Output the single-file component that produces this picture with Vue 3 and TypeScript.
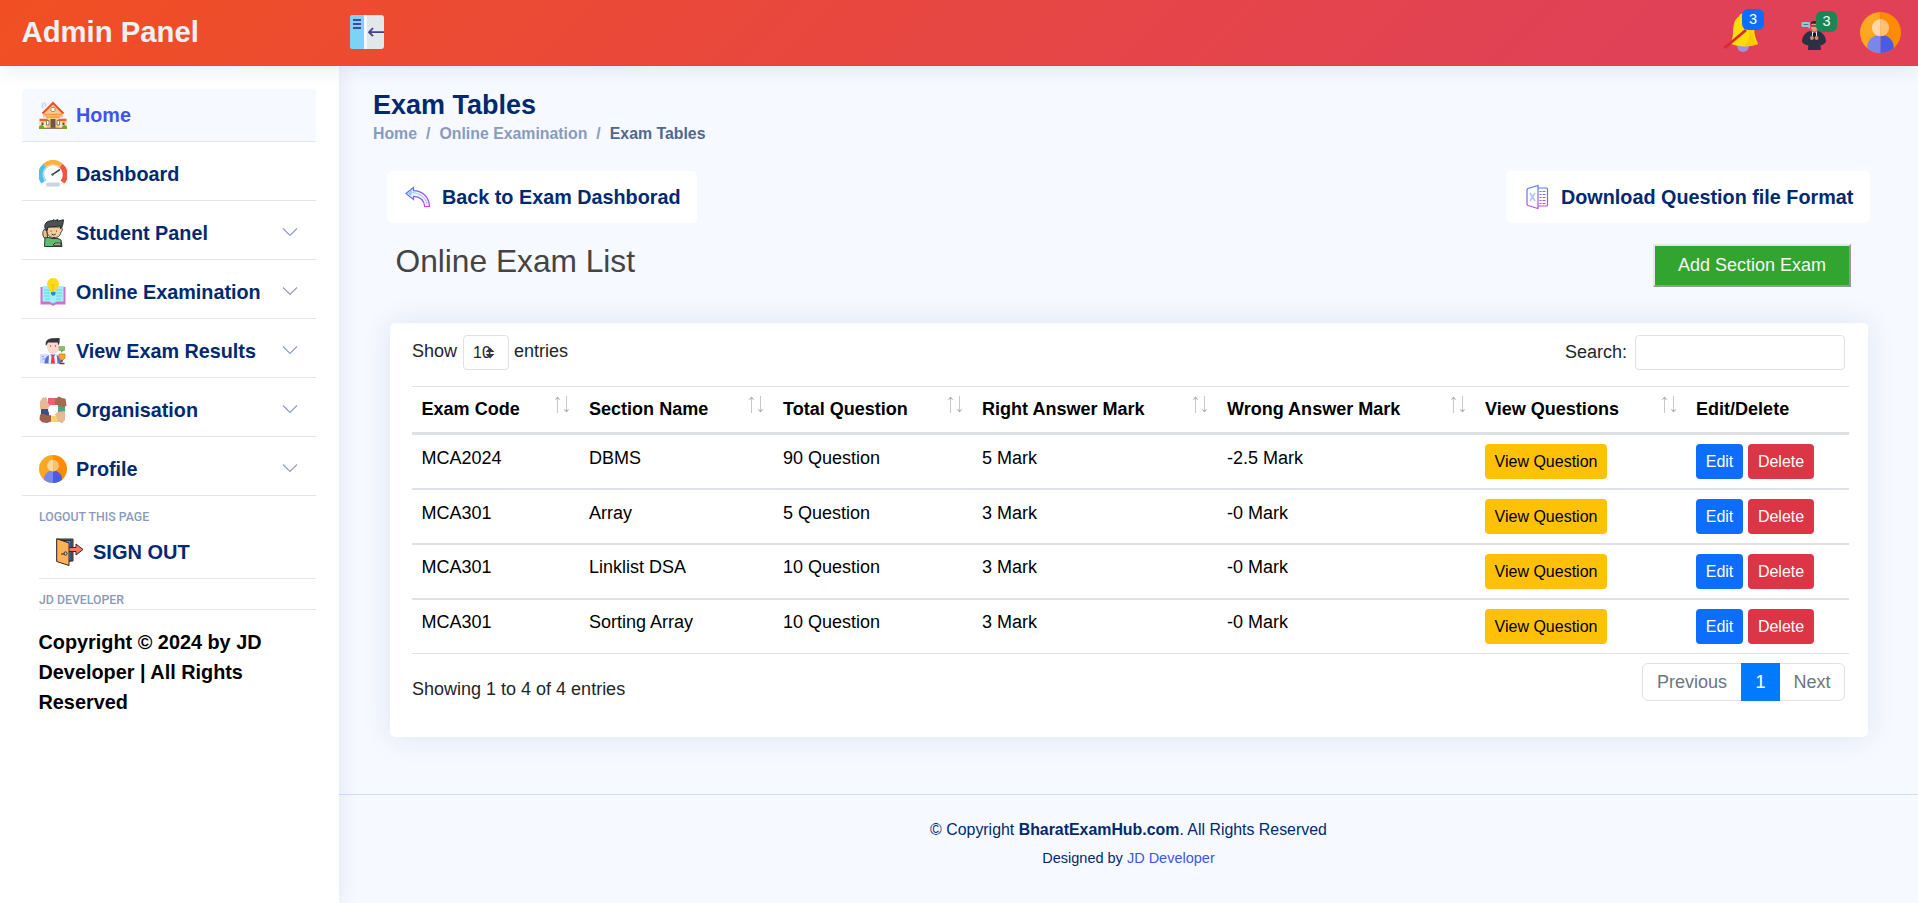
<script setup lang="ts">
interface NavItem {
  label: string
  icon: string
  active?: boolean
  expandable?: boolean
}

interface ExamRow {
  code: string
  section: string
  total: string
  right: string
  wrong: string
}

const navItems: NavItem[] = [
  { label: 'Home', icon: 'home', active: true },
  { label: 'Dashboard', icon: 'gauge' },
  { label: 'Student Panel', icon: 'student', expandable: true },
  { label: 'Online Examination', icon: 'book', expandable: true },
  { label: 'View Exam Results', icon: 'results', expandable: true },
  { label: 'Organisation', icon: 'hands', expandable: true },
  { label: 'Profile', icon: 'profile', expandable: true },
]

const columns: string[] = [
  'Exam Code',
  'Section Name',
  'Total Question',
  'Right Answer Mark',
  'Wrong Answer Mark',
  'View Questions',
  'Edit/Delete',
]

const rows: ExamRow[] = [
  { code: 'MCA2024', section: 'DBMS', total: '90 Question', right: '5 Mark', wrong: '-2.5 Mark' },
  { code: 'MCA301', section: 'Array', total: '5 Question', right: '3 Mark', wrong: '-0 Mark' },
  { code: 'MCA301', section: 'Linklist DSA', total: '10 Question', right: '3 Mark', wrong: '-0 Mark' },
  { code: 'MCA301', section: 'Sorting Array', total: '10 Question', right: '3 Mark', wrong: '-0 Mark' },
]
</script>

<template>
  <div class="app">
    <header class="header">
      <div class="brand">Admin Panel</div>
      <svg class="toggle" viewBox="0 0 34 34">
        <rect width="34" height="34" rx="3" fill="#dfe9ea" />
        <path d="M3 0H14V34H3A3 3 0 0 1 0 31V3A3 3 0 0 1 3 0Z" fill="#7bd3f5" />
        <rect x="14" width="3" height="34" fill="#f4f8fa" />
        <path d="M3 5h8M3 9h8M3 13h8" stroke="#4b459b" stroke-width="1.8" />
        <path d="M34 17.2H19.5M23 13.2l-4 4 4 4" fill="none" stroke="#453f8c" stroke-width="1.8" />
      </svg>
      <div class="header-actions">
        <div class="action bell">
          <svg viewBox="0 0 38 42" width="38" height="42">
            <circle cx="21" cy="34" r="6" fill="#a58de6" />
            <path d="M17.500 3a3 3 0 0 1 5.500.5c6 2 8 7 9 13.500.7 5.500 1.500 10 4.200 15-8 3.500-20 3-28.200-.5 2.800-4 3-9 3.200-14C11.500 11 13.500 6.500 17 4.500Z" fill="#fddc02" />
            <path d="M24 8c4 2 5.500 5 6 10 .7 6 2 11 5.700 14-4 1.500-8 1.800-13 1.700C29 27 29 16 24 8Z" fill="#f6b900" opacity=".5" />
            <path d="M2.500 36L24 18" stroke="#d92b2b" stroke-width="2.800" />
          </svg>
          <span class="badge blue">3</span>
        </div>
        <div class="action msg">
          <svg viewBox="0 0 28 30" width="28" height="30">
            <rect x="1.500" y="1" width="8.500" height="5" rx="1" fill="#8fc6df" />
            <path d="M7 5.500l3 2.300V5Z" fill="#8fc6df" />
            <path d="M3.500 3.500h5" stroke="#4a7b96" stroke-width="1" />
            <ellipse cx="14.500" cy="5.500" rx="3.600" ry="5" fill="#dc9b7b" />
            <path d="M10.700 4C10.500 1 12 0 14.500 0s4 1.200 3.800 4L17 2.800h-5Z" fill="#2e2726" />
            <path d="M11 5h6.500" stroke="#40302c" stroke-width="1.200" />
            <path d="M2 21c0-5 2.500-9 8-11l4 1.500 4.500-1.500c5 2 7.500 6 7.500 11-1.500 2-3.500 3-5.500 3.200L21 29H8l.3-4.800C5.500 24 3.500 23 2 21Z" fill="#2b3142" />
            <path d="M12 10l2.500 2.500L17 10v5h-5Z" fill="#e4e4ea" />
            <path d="M13 12h3v7h-3Z" fill="#141720" />
            <circle cx="12" cy="17" r="2" fill="#cb8b6e" />
            <circle cx="16.500" cy="17" r="2" fill="#cb8b6e" />
          </svg>
          <span class="badge green">3</span>
        </div>
        <svg class="avatar" viewBox="0 0 28 28">
          <use href="#profile-art" />
        </svg>
      </div>
    </header>

    <aside class="sidebar">
      <ul class="nav">
        <li v-for="item in navItems" :key="item.label" class="nav-item">
          <a class="nav-link" :class="{ active: item.active }">
            <svg class="nav-icon" viewBox="0 0 28 28">
              <g v-if="item.icon === 'home'">
                <path d="M4 7C2 5 5 4 3 2M6 5.500c2-2-1-3 0-4" stroke="#ccd7e1" stroke-width="1.800" fill="none" />
                <path d="M0 20h28v6H0Z" fill="#fbe3ad" />
                <path d="M8 16h12v11H8Z" fill="#fbcf77" />
                <path d="M14 2.500 24 12.500v4H4v-4Z" fill="#fbc98c" />
                <path d="M3.500 12.500 14 2l10.500 10.500" fill="none" stroke="#ee4f20" stroke-width="2" />
                <path d="M5 13.500h18M7 16h14" stroke="#f9954b" stroke-width="1.400" />
                <path d="M.5 19h8M19.500 19h8" stroke="#f2602a" stroke-width="2.600" />
                <rect x="12" y="6.500" width="4" height="4" rx="1" fill="#fff" stroke="#a1735b" stroke-width=".8" />
                <path d="M11.500 18h5v9h-5Z" fill="#765148" />
                <path d="M7.500 19.500H10V24H7.500Zm10.500 0h2.500V24H18Z" fill="#fff" stroke="#665" stroke-width=".8" />
                <path d="M2.500 21.500h2V24h-2Zm21 0h2V24h-2Z" fill="#654e45" />
                <path d="M0 28v-2.500q2.500-3 5 0V28Zm23 0v-2.500q2.500-3 5 0V28Z" fill="#79a22e" />
                <path d="M5 27.300h18" stroke="#927a65" stroke-width="1.400" />
              </g>
              <g v-else-if="item.icon === 'gauge'" fill="none">
                <circle cx="14" cy="14.500" r="9.500" fill="#fff" />
                <path d="M4.500 22A11.500 11.500 0 0 1 6 5.600" stroke="#53bdea" stroke-width="5" />
                <path d="M6 5.600A11.500 11.500 0 0 1 22 5.600" stroke="#fbb040" stroke-width="5" />
                <path d="M22 5.600A11.500 11.500 0 0 1 23.500 22" stroke="#f2543e" stroke-width="5" />
                <path d="M7 21A9.500 9.500 0 0 1 7.500 7.300" stroke="#a6dcf3" stroke-width="1.700" />
                <path d="M7.500 7.300A9.500 9.500 0 0 1 20.500 7.300" stroke="#fbd184" stroke-width="1.700" />
                <path d="M13 14.800 21 9.500" stroke="#33464f" stroke-width="1.500" />
                <circle cx="13.500" cy="14.500" r="1.300" fill="#576b7b" />
                <rect x="7" y="22.500" width="14" height="4" rx="1.500" fill="#cbd4df" />
              </g>
              <g v-else-if="item.icon === 'student'" stroke="#1c2a2a" stroke-width=".9">
                <path d="M5.500 27.500 6 18l4 .5 3 1h6l3 1.500 1 6.500Z" fill="#5bbd6d" />
                <path d="M5.500 19c-2.500-3-2-6-.5-8.500l3 1 .5 7Z" fill="#efbd8e" />
                <path d="M8 8h13c2.800.2 3 3.500 1 5-1 4.500-3 5.500-7 5.500s-6-1.500-7-5.500Z" fill="#f6cc9c" />
                <path d="M6.500 10.500C4 5 8 1.500 13 1.800l2-1.200 1 1 3-1-.4 1.500L24.500.8c-.2 3-1 8-3 9V7L9 8l-1 3.500Z" fill="#4f4f55" />
                <circle cx="12" cy="12" r=".6" fill="#16292a" stroke="none" />
                <circle cx="17.500" cy="12" r=".6" fill="#16292a" stroke="none" />
                <path d="M12.500 15.200q2.200 1.600 4.200 0M16 24h6v2.200h-8Z" fill="#f6cc9c" />
              </g>
              <g v-else-if="item.icon === 'book'">
                <path d="M1.500 9h3v14h7.500l2 2 2-2h7.500V9h3v17.500H16.500L14 28l-2.500-1.500h-10Z" fill="#cb72cb" />
                <path d="M3.500 8H10l4 3 4-3h6.500v15.500H18L14 25.500l-4-2H3.500Z" fill="#a2eff8" />
                <path d="M5 12h6M5 15h6M5 18h6M17 12h6M17 15h6M17 18h6M6 21h5M17 21h5" stroke="#62cde2" stroke-width=".9" />
                <path d="M8 6a6 6 0 1 1 10 4.500c-1 1-1 2.500-1.500 3.500h-5c-.5-1-.5-2.500-1.500-3.500A6 6 0 0 1 8 6Z" fill="#ffda17" />
                <path d="M12 6l2 2 2-2M14 8v6" fill="none" stroke="#f9b318" stroke-width=".9" />
                <path d="M12 14h4.500v2l-1 1.500h-2.500l-1-1.500Z" fill="#278bd4" />
              </g>
              <g v-else-if="item.icon === 'results'">
                <path d="M1 17h8v9.500H1Z" fill="#d5dcff" />
                <path d="M3 19.500h2M3 22h4M6 24.500h2" stroke="#8792ef" stroke-width=".9" />
                <path d="M5.500 26.500c0-5 2.500-8 5.500-9h6c3 1 5.500 4 5.500 9Z" fill="#5f6fd8" />
                <path d="M10 16l4 5 3.500-5 1 10.500h-9Z" fill="#f3f4ff" />
                <path d="M12.700 18.500h2.300l1 8h-4.200Z" fill="#d74444" />
                <path d="M8 5h12v5c0 4-3 7-6 7s-6-3-6-7Z" fill="#ffd8cd" />
                <path d="M7 9C5.500 4 9 1.500 13 1.200L20.500 1c.5 2 0 5-.7 7.500L18.500 5.500H9Z" fill="#34373d" />
                <circle cx="11.500" cy="9" r=".7" fill="#655" />
                <circle cx="16.500" cy="9" r=".7" fill="#655" />
                <rect x="19.500" y="9" width="6.500" height="5" rx="1" fill="#8bbb77" />
                <path d="M22 13v3l3-3Z" fill="#71a665" />
                <path d="M20 17h6v4l-3 3-3-3Z" fill="#f5a52f" stroke="#d27c16" stroke-width=".8" />
                <path d="M23 23v2m-2.500 1.500h5" stroke="#624426" stroke-width="1.500" />
              </g>
              <g v-else-if="item.icon === 'hands'">
                <path d="M9 2h9v7H9Z" fill="#ee5f72" />
                <path d="M19 9h7v8h-7Z" fill="#46a886" />
                <path d="M11 20h9v6h-9Z" fill="#f8d365" />
                <path d="M2 11h8v9H2Z" fill="#414a8f" />
                <path d="M1 13V5.500L4 1l1.500 1L6.500.5 8 3l1.500 5L12 9.500 9 13Z" fill="#e7b895" />
                <path d="M16 8.500V3l4-2.500L23 2l3.500.8L27 6l.5 4L23 11l-3.500-1.500Z" fill="#a86851" />
                <path d="M26 15v9L23 27.500l-2-1.300L18.500 25 17.500 20l-2.500-1.500L18.500 16Z" fill="#e7b895" />
                <path d="M12 19v6.500L8 27l-5-.7L.5 23.500 1 18.500l4-.5 3.500 1.500Z" fill="#9d604b" />
                <circle cx="13.800" cy="13.800" r="4.800" fill="#fff" />
              </g>
              <g v-else id="profile-art">
                <clipPath id="profile-clip"><circle cx="14" cy="14" r="14" /></clipPath>
                <g clip-path="url(#profile-clip)">
                  <path d="M0 0h14v28H0Z" fill="#fea720" />
                  <path d="M14 0h14v28H14Z" fill="#fe8c00" />
                  <path d="M5 28v-4a9 8.500 0 0 1 9-8.500V28Z" fill="#7986eb" />
                  <path d="M14 15.500a9 8.500 0 0 1 9 8.500v4h-9Z" fill="#4a5be4" />
                  <path d="M14 4.700a5.900 5.900 0 0 0 0 11.800Z" fill="#ffd8a6" />
                  <path d="M14 4.700a5.900 5.900 0 0 1 0 11.800Z" fill="#fdc175" />
                </g>
              </g>
            </svg>
            <span>{{ item.label }}</span>
            <svg v-if="item.expandable" class="chevron" viewBox="0 0 16 16">
              <path d="M1 4.500l7 7 7-7" fill="none" stroke="#8b9cbd" stroke-width="1.100" />
            </svg>
          </a>
        </li>
      </ul>
      <div class="nav-group">
        <div class="nav-heading">LOGOUT THIS PAGE</div>
        <a class="signout">
          <svg class="nav-icon" viewBox="0 0 28 28" stroke="#2f2a2c" stroke-width="1">
            <path d="M1 1h16v22H1Z" fill="#875f38" />
            <path d="M5 2.500h10V23H5Z" fill="#3d8df0" />
            <path d="M12 9.500h8V6l7 5.500L20 17v-3.500h-8Z" fill="#fa7757" />
            <path d="M.7.700 13 5v22.500L.7 23.500Z" fill="#ffb155" />
            <circle cx="9.500" cy="15.500" r="1.600" fill="#cdd6e2" />
            <path d="M5 16h4" />
          </svg>
          <span>SIGN OUT</span>
        </a>
        <div class="nav-heading dev">JD DEVELOPER</div>
        <p class="copy">Copyright © 2024 by JD Developer | All Rights Reserved</p>
      </div>
    </aside>

    <main class="main">
      <h1>Exam Tables</h1>
      <nav class="crumbs">
        <a>Home</a><i>/</i><a>Online Examination</a><i>/</i><b>Exam Tables</b>
      </nav>
      <div class="links">
        <a class="link-card">
          <svg viewBox="0 0 28 28" class="link-icon">
            <defs>
              <linearGradient id="arrow-grad" x1="0" y1="0" x2="1" y2="1">
                <stop offset="0" stop-color="#3f7df2" />
                <stop offset="1" stop-color="#d63df0" />
              </linearGradient>
            </defs>
            <path d="M2 10.500 9.500 4.500v3.200C18.500 8 25 13.500 25.500 23.500h-4.800C20 17.500 16 13.500 9.500 13.300v3.200Z" fill="#f1f3ff" stroke="url(#arrow-grad)" stroke-width="1.200" />
            <path d="M3.500 10.500 7.500 7.500v2c6.500.2 14 4 15.600 11.500" fill="none" stroke="#95c4fb" stroke-width=".9" />
            <path d="M3.500 10.500l4-2.500v5Z" fill="#9bc9fb" />
          </svg>
          <span>Back to Exam Dashborad</span>
        </a>
        <a class="link-card download">
          <svg viewBox="0 0 28 28" class="link-icon">
            <defs>
              <linearGradient id="sheet-grad" x1="0" y1="0" x2="0" y2="28" gradientUnits="userSpaceOnUse">
                <stop offset="0" stop-color="#4280f2" />
                <stop offset="1" stop-color="#cb45ec" />
              </linearGradient>
            </defs>
            <g fill="none" stroke="url(#sheet-grad)" stroke-width="1.200">
              <path d="M15 2.500 5 5.500Q4 6 4 7v14q0 1 1 1.500l10 3Z" />
              <path d="M15 5h8.500q1 0 1 1v16q0 1-1 1H15" />
              <path d="M16.500 8.500h2m1 0h3M16.500 11.500h2m1 0h3M16.500 14.500h2m1 0h3M16.500 17.500h2m1 0h3M16.500 20.500h2m1 0h3" />
            </g>
            <path d="M7 10l5 8m0-8-5 8" fill="none" stroke="#a9c3fa" stroke-width="1.500" />
          </svg>
          <span>Download Question file Format</span>
        </a>
      </div>
      <div class="list-head">
        <h2>Online Exam List</h2>
        <button class="add" type="button">Add Section Exam</button>
      </div>
      <section class="card">
        <div class="controls">
          <div class="show">
            <span>Show</span>
            <div class="select">
              <span>10</span>
              <svg viewBox="0 0 10 12" class="caret">
                <path d="M5 .5 9.500 5h-9ZM5 11.500.5 7h9Z" fill="#343a40" />
              </svg>
            </div>
            <span>entries</span>
          </div>
          <div class="search">
            <label>Search:</label>
            <input type="text" aria-label="Search" />
          </div>
        </div>
        <table>
          <colgroup>
            <col class="c1" /><col class="c2" /><col class="c3" /><col class="c4" /><col class="c5" /><col class="c6" /><col class="c7" />
          </colgroup>
          <thead>
            <tr>
              <th v-for="(c, i) in columns" :key="c">
                <div class="th">
                  <span>{{ c }}</span>
                  <svg v-if="i < 6" class="sort" viewBox="0 0 16 17">
                    <path d="M3.500 1.500V17M12.500 0v15.500" stroke="#c8c8ca" stroke-width="1" fill="none" />
                    <path d="M.3 4.300 3.500.5l3.200 3.800-3.200-1.500ZM9.300 12.700l3.200 3.800 3.200-3.800-3.200 1.500Z" fill="#b0b0b3" />
                  </svg>
                </div>
              </th>
            </tr>
          </thead>
          <tbody>
            <tr v-for="r in rows" :key="r.section">
              <td>{{ r.code }}</td>
              <td>{{ r.section }}</td>
              <td>{{ r.total }}</td>
              <td>{{ r.right }}</td>
              <td>{{ r.wrong }}</td>
              <td class="act"><div class="btns"><button class="btn yellow" type="button">View Question</button></div></td>
              <td class="act">
                <div class="btns">
                  <button class="btn edit" type="button">Edit</button>
                  <button class="btn delete" type="button">Delete</button>
                </div>
              </td>
            </tr>
          </tbody>
        </table>
        <div class="table-foot">
          <div class="info">Showing 1 to 4 of 4 entries</div>
          <div class="pager">
            <span class="prev">Previous</span><span class="page">1</span><span class="next">Next</span>
          </div>
        </div>
      </section>
      <footer class="footer">
        <div class="f1">© Copyright <strong>BharatExamHub.com</strong>. All Rights Reserved</div>
        <div class="f2">Designed by <a>JD Developer</a></div>
      </footer>
    </main>
  </div>
</template>

<style>
body {
  margin: 0;
  background: #f6f9ff;
}
</style>

<style scoped>
* {
  box-sizing: border-box;
}
.app {
  height: 903px;
  overflow: hidden;
  display: grid;
  grid-template: 66px 837px / 339px 1579px;
  font-family: 'Liberation Sans', Arial, sans-serif;
  font-size: 18px;
  line-height: 27px;
  color: #212529;
  background: #f6f9ff;
}
.header {
  grid-column: 1 / 3;
  z-index: 3;
  display: flex;
  align-items: center;
  background: linear-gradient(135deg, #f14f22 0%, #ec4b32 22%, #e04157 85%, #e04157 100%);
  box-shadow: 0 2px 20px rgba(1, 41, 112, 0.1);
}
.brand {
  width: 328px;
  padding: 0 0 2px 21.5px;
  font-size: 29.3px;
  font-weight: 700;
  line-height: 34px;
  color: #f0f0f0;
}
.toggle {
  width: 34px;
  height: 34px;
  margin: 0 0 2px 22px;
}
.header-actions {
  margin-left: auto;
  display: flex;
  padding-right: 17px;
}
.action {
  position: relative;
  height: 42px;
}
.action svg {
  display: block;
}
.bell {
  width: 78px;
}
.msg {
  width: 60px;
  padding-top: 9px;
}
.badge {
  position: absolute;
  width: 22px;
  height: 21px;
  border-radius: 6px;
  color: #fff;
  font-size: 14.5px;
  line-height: 21px;
  text-align: center;
}
.blue {
  left: 20px;
  top: -3px;
  background: #0d6efd;
}
.green {
  left: 16px;
  top: -1px;
  width: 21px;
  background: #198754;
}
.avatar {
  width: 41px;
  height: 41px;
}
.sidebar {
  z-index: 2;
  background: #fff;
  padding: 23px 23px 0 22px;
  box-shadow: 0 0 20px rgba(1, 41, 112, 0.1);
}
.nav {
  list-style: none;
  margin: 0;
  padding: 0;
}
.nav-item {
  height: 53px;
  margin-bottom: 6px;
  border-bottom: 1px solid #e3e5e8;
}
.nav-link {
  display: flex;
  align-items: center;
  height: 52px;
  padding: 0 18px 0 17px;
  border-radius: 4px;
  font-size: 19.8px;
  font-weight: 700;
  color: #012970;
}
.nav-link.active {
  background: #f6f9ff;
  color: #4154f1;
}
.nav-icon {
  width: 28px;
  height: 28px;
  margin-right: 9px;
}
.chevron {
  width: 16px;
  height: 16px;
  margin: 0 0 2px auto;
}
.nav-group {
  padding-left: 17px;
}
.nav-heading {
  padding-top: 7px;
  font-family: Roboto, 'Liberation Sans', sans-serif;
  font-size: 12.3px;
  font-weight: 500;
  line-height: 17px;
  color: #899bbd;
}
.signout {
  display: flex;
  align-items: center;
  height: 53px;
  padding: 0 0 0 17px;
  margin-bottom: 7px;
  border-bottom: 1px solid #e3e5e8;
  font-size: 20px;
  font-weight: 700;
  color: #012970;
}
.dev {
  height: 31px;
  padding-top: 13px;
  margin-top: -7px;
  border-bottom: 1px solid #e3e5e8;
}
.copy {
  width: 250px;
  margin: 17px 0 0 -0.5px;
  font-size: 19.85px;
  font-weight: 700;
  line-height: 30px;
  color: #000;
}
.main {
  padding: 23px 34px 0;
}
h1 {
  margin: 0;
  font-size: 27px;
  font-weight: 700;
  line-height: 32px;
  color: #012970;
}
.crumbs {
  display: flex;
  gap: 9px;
  margin-top: 1px;
  font-size: 15.85px;
  font-weight: 700;
  line-height: 24px;
  color: #899bbd;
}
.crumbs i {
  font-style: normal;
}
.crumbs b {
  color: #51678f;
}
.links {
  display: flex;
  justify-content: space-between;
  margin: 25px 14px 0;
}
.link-card {
  display: flex;
  align-items: center;
  width: 310px;
  height: 52px;
  padding-left: 17px;
  background: #fff;
  border-radius: 5px;
  font-size: 19.8px;
  font-weight: 700;
  color: #012970;
  white-space: nowrap;
}
.link-card.download {
  width: 364px;
}
.link-icon {
  width: 28px;
  height: 28px;
  margin-right: 10px;
}
.list-head {
  display: flex;
  justify-content: space-between;
  height: 100px;
  padding: 21px 33px 0 22.5px;
}
h2 {
  margin: -2px 0 0;
  font-size: 31.7px;
  font-weight: 400;
  line-height: 38px;
  color: #444;
}
.add {
  width: 198px;
  height: 43px;
  padding: 0;
  border: 2px solid;
  border-color: #e6e6e6 #979797 #979797 #e6e6e6;
  background: #32a531;
  font: 18px 'Liberation Sans', Arial, sans-serif;
  color: #f5f5f5;
}
.card {
  width: 1478px;
  height: 414px;
  margin-left: 17px;
  padding: 12px 19px 0 22px;
  border-radius: 5px;
  background: #fff;
  box-shadow: 0 0 30px rgba(1, 41, 112, 0.1);
}
.controls {
  display: flex;
  justify-content: space-between;
  height: 51px;
  padding-right: 4px;
}
.show {
  display: flex;
  gap: 5.500px;
}
.show > span {
  line-height: 33px;
}
.select {
  position: relative;
  width: 46px;
  height: 35px;
  padding-left: 9.5px;
  border: 1px solid #dee2e6;
  border-radius: 4px;
  font-size: 16px;
  line-height: 33px;
}
.caret {
  position: absolute;
  left: 21px;
  top: 11px;
  width: 10px;
  height: 12px;
}
.search {
  display: flex;
  gap: 8px;
}
.search label {
  line-height: 35px;
}
.search input {
  width: 210px;
  height: 35px;
  border: 1px solid #dee2e6;
  border-radius: 4px;
  background: #fff;
}
table {
  width: 1437px;
  table-layout: fixed;
  border-collapse: separate;
  border-spacing: 0;
  border-top: 1px solid #dee2e6;
  color: #000;
}
.c1 { width: 167.500px; }
.c2 { width: 194px; }
.c3 { width: 199px; }
.c4 { width: 245px; }
.c5 { width: 258px; }
.c6 { width: 211px; }
.c7 { width: 162.500px; }
th {
  height: 48px;
  padding: 0 9px 0 9.5px;
  border-bottom: 3px solid #dee2e6;
  font-size: 18.05px;
  text-align: left;
  vertical-align: top;
}
.th {
  display: flex;
  justify-content: space-between;
  padding-top: 9px;
}
.sort {
  width: 16px;
  height: 17px;
  margin-right: 1px;
}
td {
  height: 55px;
  padding: 10px 9.500px 0;
  border-bottom: 2px solid #dee2e6;
  vertical-align: top;
}
tr:nth-child(n + 3) td {
  padding-top: 9px;
}
tbody tr td.act {
  padding: 9px 9px 0;
}
tbody tr:last-child td {
  height: 54px;
  border-bottom-width: 1px;
}
.btns {
  display: flex;
  gap: 5px;
}
.btn {
  height: 35px;
  padding: 0 0 0 1px;
  border: 0;
  border-radius: 4px;
  font: 16px 'Liberation Sans', Arial, sans-serif;
  color: #fff;
}
.yellow {
  width: 122px;
  background: #ffc107;
  color: #000;
}
.edit {
  width: 47px;
  background: #0d6efd;
}
.delete {
  width: 66px;
  background: #dc3545;
}
.table-foot {
  display: flex;
  justify-content: space-between;
  padding: 9px 4px 0 0;
}
.info {
  padding-top: 13px;
}
.pager {
  display: flex;
  width: 203px;
  height: 38px;
  border: 1px solid #dee2e6;
  border-radius: 6px;
  line-height: 36px;
  text-align: center;
  color: #6c757d;
}
.prev {
  width: 98px;
}
.page {
  width: 39px;
  margin: -1px 0;
  line-height: 38px;
  background: #007bff;
  color: #fff;
}
.next {
  flex: 1;
}
.footer {
  margin: 57px -34px 0;
  padding-top: 23px;
  border-top: 1px solid #cddfff;
  text-align: center;
  color: #012970;
}
.f1 {
  font-size: 15.9px;
  line-height: 24px;
}
.f2 {
  padding-top: 6px;
  font-size: 14.5px;
  line-height: 21px;
}
.f2 a {
  color: #4154f1;
}
</style>
